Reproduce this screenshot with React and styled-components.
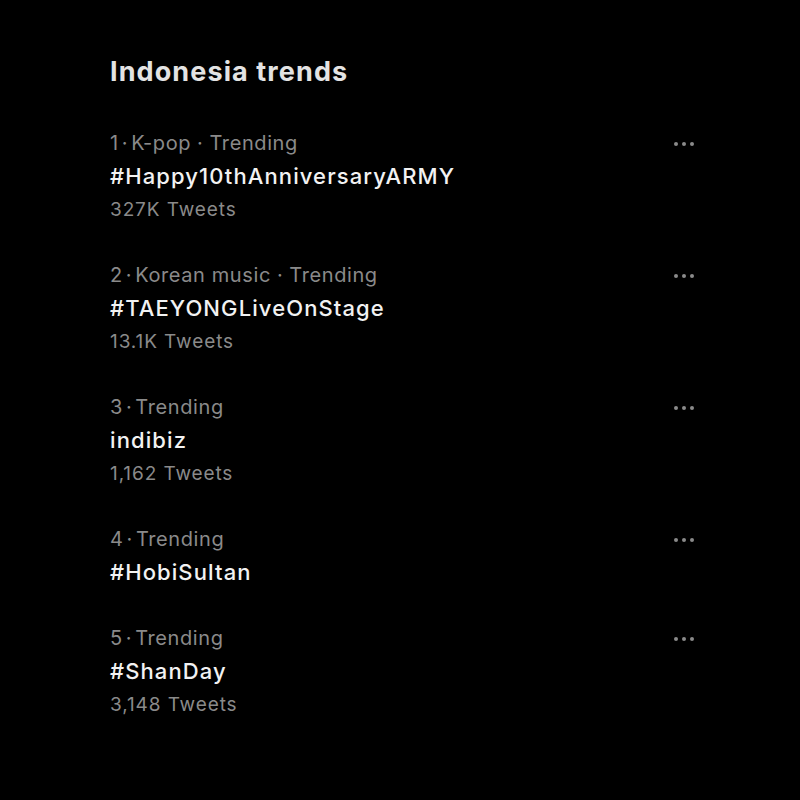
import React from "react";
import styled, { createGlobalStyle } from "styled-components";

const GlobalStyle = createGlobalStyle`
  html, body {
    margin: 0;
    padding: 0;
    background: #000;
  }
  body {
    font-family: Inter, "Noto Sans", "Liberation Sans", sans-serif;
    -webkit-font-smoothing: antialiased;
  }
`;

const Page = styled.div`
  min-height: 800px;
  background: #000;
  padding: 52px 106px 0 110px;
  box-sizing: border-box;
`;

const Heading = styled.h1`
  margin: 0 0 35px;
  height: 40px;
  line-height: 40px;
  font-size: 27px;
  font-weight: 700;
  color: #e3e3e3;
  letter-spacing: 1.1px;
`;

const List = styled.div`
  display: flex;
  flex-direction: column;
`;

const Item = styled.div`
  display: flex;
  justify-content: space-between;
  align-items: flex-start;
  padding-bottom: 33px;
`;

const Text = styled.div`
  display: flex;
  flex-direction: column;
`;

const Meta = styled.div`
  height: 33px;
  line-height: 33px;
  font-size: 20px;
  letter-spacing: 0.6px;
  color: #8a8a8a;
`;

const Dot = styled.span`
  margin: 0 ${(p) => (p.$tight ? "3px" : "6px")};
`;

const Name = styled.div`
  height: 33px;
  line-height: 33px;
  font-size: 22px;
  font-weight: 500;
  letter-spacing: 1.1px;
  color: #f2f2f2;
`;

const Count = styled(Meta)`
  font-size: 19px;
  letter-spacing: 0.9px;
`;

const More = styled.div`
  display: flex;
  gap: 4px;
  height: 33px;
  align-items: center;
  span {
    width: 4px;
    height: 4px;
    border-radius: 50%;
    background: #8a8a8a;
  }
`;

const trends = [
  { rank: 1, category: "K-pop", name: "#Happy10thAnniversaryARMY", count: "327K Tweets" },
  { rank: 2, category: "Korean music", name: "#TAEYONGLiveOnStage", count: "13.1K Tweets" },
  { rank: 3, name: "indibiz", count: "1,162 Tweets" },
  { rank: 4, name: "#HobiSultan" },
  { rank: 5, name: "#ShanDay", count: "3,148 Tweets" },
];

export default function App() {
  return (
    <Page>
      <GlobalStyle />
      <Heading>Indonesia trends</Heading>
      <List>
        {trends.map((t) => (
          <Item key={t.name}>
            <Text>
              <Meta>
                {t.rank}
                <Dot $tight>·</Dot>
                {t.category && (
                  <>
                    {t.category}
                    <Dot>·</Dot>
                  </>
                )}
                Trending
              </Meta>
              <Name>{t.name}</Name>
              {t.count && <Count>{t.count}</Count>}
            </Text>
            <More>
              <span />
              <span />
              <span />
            </More>
          </Item>
        ))}
      </List>
    </Page>
  );
}
